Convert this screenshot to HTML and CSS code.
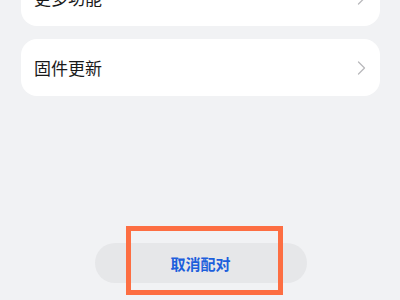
FILE: index.html
```html
<!DOCTYPE html>
<html lang="zh">
<head>
<meta charset="utf-8">
<link rel="stylesheet" href="styles.css">
</head>
<body>
<div class="page">
  <div class="list">
    <div class="card">
      <span class="label">更多功能</span>
      <svg class="chev" width="9" height="14" viewBox="0 0 9 14"><path d="M1.5 1 L7.5 7 L1.5 13" fill="none" stroke="#b9b9bc" stroke-width="1.3" stroke-linecap="round" stroke-linejoin="round"/></svg>
    </div>
    <div class="card">
      <span class="label">固件更新</span>
      <svg class="chev" width="9" height="14" viewBox="0 0 9 14"><path d="M1.5 1 L7.5 7 L1.5 13" fill="none" stroke="#b9b9bc" stroke-width="1.3" stroke-linecap="round" stroke-linejoin="round"/></svg>
    </div>
  </div>
  <div class="footer">
    <div class="btn-wrap">
      <button class="btn">取消配对</button>
      <div class="highlight"></div>
    </div>
  </div>
</div>
</body>
</html>
```
FILE: styles.css
```css
html, body {
  margin: 0;
  padding: 0;
  background: #f1f2f4;
}
body {
  font-family: "Noto Sans CJK SC", "Noto Sans", sans-serif;
  width: 400px;
  height: 300px;
  overflow: hidden;
}
.page {
  height: 300px;
  display: flex;
  flex-direction: column;
  padding: 0 20px 17px 21px;
  box-sizing: border-box;
}
.list {
  display: flex;
  flex-direction: column;
  gap: 13px;
  margin-top: -31px;
}
.card {
  background: #ffffff;
  border-radius: 16px;
  height: 57px;
  display: flex;
  align-items: center;
  justify-content: space-between;
  padding: 0 14px 0 13px;
}
.label {
  font-size: 17px;
  color: #1a1a1a;
  line-height: 1;
}
.chev {
  display: block;
}
.footer {
  margin-top: auto;
  display: flex;
  justify-content: center;
}
.btn-wrap {
  position: relative;
}
.btn {
  width: 212px;
  height: 40px;
  border: none;
  border-radius: 20px;
  background: #e6e7e9;
  color: #1d5fdc;
  font-family: "Noto Sans CJK SC", "Noto Sans", sans-serif;
  font-size: 15px;
  font-weight: 600;
  display: block;
  padding: 0;
}
.highlight {
  position: absolute;
  left: 31px;
  top: -17px;
  width: 157px;
  height: 69px;
  box-sizing: border-box;
  border: 5px solid #fd6e42;
  pointer-events: none;
}
```
